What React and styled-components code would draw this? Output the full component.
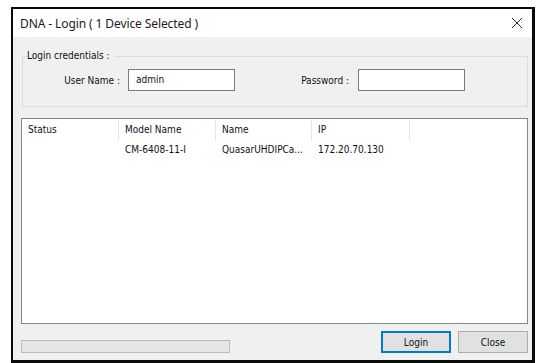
import React from 'react';
import styled, { createGlobalStyle } from 'styled-components';

const GlobalStyle = createGlobalStyle`
body {
  margin: 0;
  background: #ffffff;
  font-family: "DejaVu Sans Condensed", "DejaVu Sans", sans-serif;
}
`;

const Page = styled.div`
padding: 7px 0 0 11px;
`;

const Window = styled.div`
width: 519px;
height: 351px;
border: 2px solid #0a0a0a;
border-right-width: 3px;
border-bottom-width: 3px;
background: #f0f0f0;
display: flex;
flex-direction: column;
box-sizing: content-box;
`;

const TitleBar = styled.div`
height: 28px;
flex: none;
background: #ffffff;
display: flex;
align-items: center;
justify-content: space-between;
padding: 0 8px 0 7px;
`;

const Title = styled.div`
font-family: "Noto Sans", "Open Sans", sans-serif;
font-size: 12px;
letter-spacing: -0.1px;
color: #1a1a1a;
margin-top: 1px;
`;

const CloseIcon = styled.svg`
width: 12px;
height: 12px;
margin-right: 1px;
`;

const Body = styled.div`
flex: 1;
display: flex;
flex-direction: column;
padding: 12px 4px 6px 8px;
`;

const Group = styled.fieldset`
margin: 0 0 0 1px;
padding: 6px 0 0;
border: 1px solid #dcdcdc;
border-radius: 0;
height: 58px;
box-sizing: border-box;
display: flex;
align-items: flex-start;
min-width: 0;
flex: none;
`;

const Legend = styled.legend`
font-size: 10px;
line-height: 14px;
color: #111;
padding: 0 4px 0 0;
margin-left: 4px;
`;

const Field = styled.div`
display: flex;
align-items: center;
width: ${(p) => p.$width}px;
justify-content: flex-end;
gap: ${(p) => p.$gap}px;
`;

const Label = styled.span`
font-size: 10px;
color: #111;
`;

const TextBox = styled.div`
width: 107px;
height: 22px;
border: 1px solid #7a7a7a;
background: #fff;
font-size: 10px;
color: #111;
padding: 4px 0 0 7px;
box-sizing: border-box;
line-height: 12px;
`;

const List = styled.div`
margin-top: 11px;
height: 206px;
flex: none;
border: 1px solid #828790;
background: #fff;
box-sizing: border-box;
`;

const HeaderRow = styled.div`
display: flex;
height: 22px;
`;

const HeaderCell = styled.div`
width: ${(p) => p.$width}px;
font-size: 10px;
color: #111;
padding: 5px 0 0 6px;
box-sizing: border-box;
border-right: 1px solid #e5e5e5;
`;

const Row = styled.div`
display: flex;
height: 18px;
`;

const Cell = styled.div`
width: ${(p) => p.$width}px;
font-size: 10px;
color: #111;
padding: 3px 0 0 6px;
box-sizing: border-box;
white-space: nowrap;
`;

const Footer = styled.div`
margin-top: 7px;
display: flex;
align-items: flex-end;
justify-content: space-between;
`;

const Progress = styled.div`
width: 209px;
height: 13px;
border: 1px solid #bcbcbc;
background: #e6e6e6;
box-sizing: border-box;
`;

const Buttons = styled.div`
display: flex;
gap: 7px;
`;

const Button = styled.button`
width: 70px;
height: 22px;
font-family: "DejaVu Sans Condensed", "DejaVu Sans", sans-serif;
font-size: 10px;
color: #111;
background: #e1e1e1;
border: 1px solid ${(p) => (p.$default ? '#0078d7' : '#adadad')};
box-shadow: ${(p) => (p.$default ? 'inset 0 0 0 1px #0078d7' : 'none')};
padding: 0;
`;

const columns = [
  { name: 'Status', width: 97 },
  { name: 'Model Name', width: 97 },
  { name: 'Name', width: 96 },
  { name: 'IP', width: 98 },
];

const rows = [
  { status: '', model: 'CM-6408-11-I', name: 'QuasarUHDIPCa...', ip: '172.20.70.130' },
];

export default function App() {
  return (
    <Page>
      <GlobalStyle />
      <Window>
        <TitleBar>
          <Title>DNA - Login ( 1 Device Selected )</Title>
          <CloseIcon viewBox="0 0 12 12">
            <path d="M1 1 L11 11 M11 1 L1 11" stroke="#222" strokeWidth="1" fill="none" />
          </CloseIcon>
        </TitleBar>
        <Body>
          <Group>
            <Legend>Login credentials :</Legend>
            <Field $width={212} $gap={8}>
              <Label>User Name :</Label>
              <TextBox>admin</TextBox>
            </Field>
            <Field $width={230} $gap={9}>
              <Label>Password :</Label>
              <TextBox />
            </Field>
          </Group>
          <List>
            <HeaderRow>
              {columns.map((c) => (
                <HeaderCell key={c.name} $width={c.width}>{c.name}</HeaderCell>
              ))}
            </HeaderRow>
            {rows.map((r) => (
              <Row key={r.ip}>
                <Cell $width={97}>{r.status}</Cell>
                <Cell $width={97}>{r.model}</Cell>
                <Cell $width={96}>{r.name}</Cell>
                <Cell $width={98}>{r.ip}</Cell>
              </Row>
            ))}
          </List>
          <Footer>
            <Progress />
            <Buttons>
              <Button $default>Login</Button>
              <Button>Close</Button>
            </Buttons>
          </Footer>
        </Body>
      </Window>
    </Page>
  );
}
